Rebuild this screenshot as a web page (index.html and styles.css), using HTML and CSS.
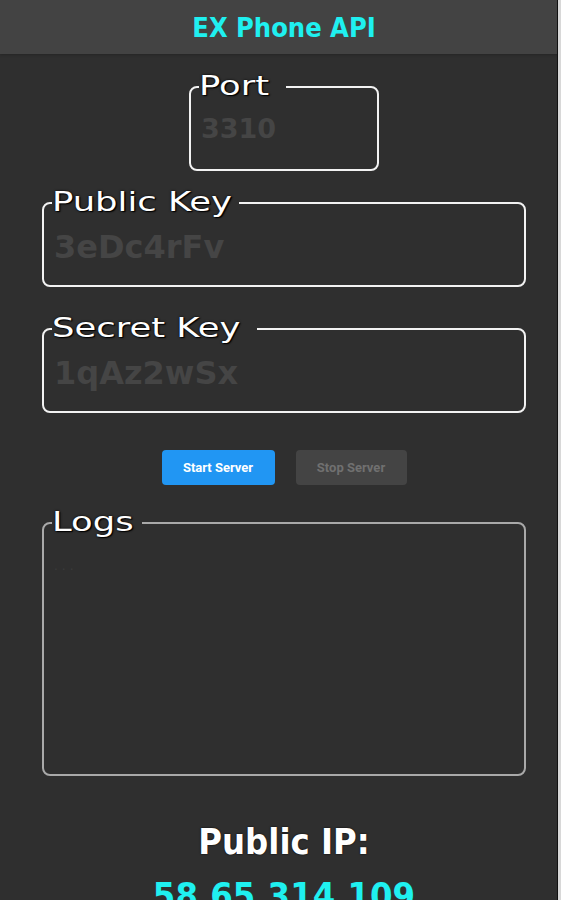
FILE: index.html
```html
<!DOCTYPE html>
<html lang="en">
<head>
    <meta charset="UTF-8">
    <meta name="viewport" content="width=device-width, initial-scale=1.0">
    <title>EX Phone API</title>
    <link rel="stylesheet" href="styles.css">
</head>
<body>
    <div class="screen">
        <div class="app">
            <header class="topbar">
                <h1>EX Phone API</h1>
            </header>

            <main class="content">
                <fieldset class="field field-port">
                    <legend class="legend-port"><span>Port</span></legend>
                    <div class="value value-port">3310</div>
                </fieldset>

                <fieldset class="field field-public">
                    <legend class="legend-public"><span>Public Key</span></legend>
                    <div class="value">3eDc4rFv</div>
                </fieldset>

                <fieldset class="field field-secret">
                    <legend class="legend-secret"><span>Secret Key</span></legend>
                    <div class="value">1qAz2wSx</div>
                </fieldset>

                <div class="actions">
                    <button class="btn btn-start">Start Server</button>
                    <button class="btn btn-stop">Stop Server</button>
                </div>

                <fieldset class="field field-logs">
                    <legend class="legend-logs"><span>Logs</span></legend>
                    <div class="log-text">...</div>
                </fieldset>

                <div class="ip-block">
                    <h2>Public IP:</h2>
                    <div class="ip">58.65.314.109</div>
                </div>
            </main>
        </div>
    </div>
</body>
</html>
```

FILE: styles.css
```css
html, body { margin: 0; padding: 0; background: #d8d8d8; height: 100%; overflow: hidden; }
body { font-family: "DejaVu Sans", sans-serif; }

.screen { width: 557px; height: 900px; overflow: hidden; border-right: 1px solid #111; background: #2f2f2f; }
.app { width: 568px; }

.topbar { height: 54px; background: #434343; display: flex; align-items: center; justify-content: center; box-shadow: 0 1px 2px #262626; }
.topbar h1 { margin: 0; font-family: "DejaVu Sans Condensed", sans-serif; font-weight: bold; font-size: 27px; color: #1ff0f0; }

.content { display: flex; flex-direction: column; align-items: center; padding-top: 21px; }

/* bordered boxes with the label sitting on the top edge */
.field { box-sizing: border-box; width: 484px; height: 96px; margin: 0; padding: 0 10px; border: 2px solid #f2f2f2; border-radius: 8px; }
.field legend { padding: 0; margin-left: -2px; height: 24px; }
.field legend span { display: inline-block; font-size: 26px; line-height: 22px; color: #fff; transform: scaleX(1.36); transform-origin: left center; text-shadow: 0 0 2px #000, 1px 1px 1px #000; }
.legend-port { width: 87px; }
.legend-public { width: 187px; }
.legend-secret { width: 205px; }
.legend-logs { width: 90px; }

.field-port { width: 190px; }
.field-public { margin-top: 20px; }
.field-secret { margin-top: 30px; }

.value { font-weight: bold; font-size: 32px; line-height: 32px; color: #454545; margin-top: 16px; }
.value-port { font-size: 27px; line-height: 27px; }

.actions { display: flex; gap: 21px; margin: 37px 0 26px; }
.btn { height: 35px; border: none; border-radius: 4px; font-family: Roboto, sans-serif; font-weight: bold; font-size: 13px; padding: 0; }
.btn-start { width: 113px; background: #2196f3; color: #fff; }
.btn-stop { width: 111px; background: #444; color: #707070; }

.field-logs { height: 265px; border-color: #a9a9a9; }
.log-text { color: #3c3c3c; font-size: 12px; letter-spacing: 4px; margin-top: 24px; }

.ip-block { text-align: center; margin-top: 48px; font-family: "DejaVu Sans Condensed", sans-serif; font-weight: bold; }
.ip-block h2 { margin: 0; font-size: 36px; line-height: 36px; color: #fff; text-shadow: 0 0 2px #000; }
.ip { font-size: 36px; line-height: 36px; color: #1ff0f0; margin-top: 18px; }
```
